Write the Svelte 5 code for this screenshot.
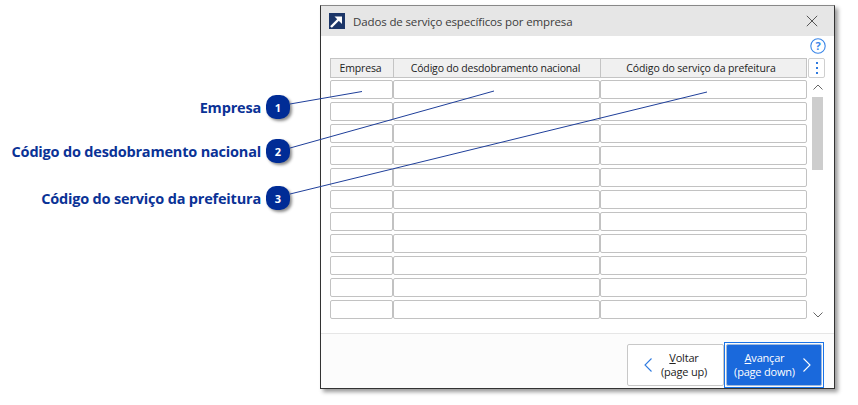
<script>
  const rows = Array.from({ length: 11 }, (_, i) => i);
  const notes = [
    { n: 1, label: 'Empresa', y: 95 },
    { n: 2, label: 'Código do desdobramento nacional', y: 139 },
    { n: 3, label: 'Código do serviço da prefeitura', y: 186 }
  ];
</script>

<div class="page">
  <div class="notes">
    {#each notes as note}
      <div class="note" style="top:{note.y}px">
        <span class="label">{note.label}</span>
        <span class="badge">{note.n}</span>
      </div>
    {/each}
  </div>

  <section class="window">
    <header class="titlebar">
      <svg class="appicon" width="16" height="16" viewBox="0 0 16 16">
        <rect width="16" height="16" fill="#1c3668" />
        <path d="M2 14 L10 6" stroke="#fff" stroke-width="2.4" />
        <path d="M5.5 3.5 H13 V11 Z" fill="#fff" />
      </svg>
      <span class="title">Dados de serviço específicos por empresa</span>
      <svg class="close" width="12" height="12" viewBox="0 0 12 12">
        <path d="M.8 .8 L11.2 11.2 M11.2 .8 L.8 11.2" stroke="#555" stroke-width="1" fill="none" />
      </svg>
    </header>

    <div class="body">
      <div class="helprow">
        <svg width="16" height="16" viewBox="0 0 16 16">
          <circle cx="8" cy="8" r="7.2" fill="none" stroke="#3a86e8" stroke-width="1.1" />
          <text x="8" y="11.8" text-anchor="middle" class="q">?</text>
        </svg>
      </div>
      <div class="tablewrap">
        <div class="tablecol">
          <div class="thead">
            <div class="th c1">Empresa</div>
            <div class="th c2">Código do desdobramento nacional</div>
            <div class="th c3">Código do serviço da prefeitura</div>
          </div>
          <div class="rows">
            {#each rows as r}
              <div class="row">
                <div class="cell c1"></div>
                <div class="cell c2"></div>
                <div class="cell c3"></div>
              </div>
            {/each}
          </div>
        </div>
        <div class="side">
          <div class="kebab"><i></i><i></i><i></i></div>
          <div class="scroll">
            <svg width="10" height="6" viewBox="0 0 10 6"><path d="M.5 5.5 L5 1 L9.5 5.5" fill="none" stroke="#666" /></svg>
            <div class="track"><div class="thumb"></div></div>
            <svg width="10" height="6" viewBox="0 0 10 6"><path d="M.5 .5 L5 5 L9.5 .5" fill="none" stroke="#666" /></svg>
          </div>
        </div>
      </div>
    </div>

    <footer class="footer">
      <button class="btn back">
        <svg width="8" height="14" viewBox="0 0 8 14"><path d="M7.5 .5 L1 7 L7.5 13.5" fill="none" stroke="#2f7be0" stroke-width="1.1" /></svg>
        <span class="btxt"><span><u>V</u>oltar</span><span>(page up)</span></span>
      </button>
      <div class="focus">
        <button class="btn next">
          <span class="btxt"><span><u>A</u>vançar</span><span>(page down)</span></span>
          <svg width="8" height="14" viewBox="0 0 8 14"><path d="M.5 .5 L7 7 L.5 13.5" fill="none" stroke="#fff" stroke-width="1.1" /></svg>
        </button>
      </div>
    </footer>
  </section>

  <svg class="leaders" width="858" height="405" viewBox="0 0 858 405">
    <path d="M290 104 L362 91.5 M290 148 L494 91 M290 194 L707 92" stroke="#1f3f9a" stroke-width="1" fill="none" />
  </svg>
</div>

<style>
  :global(body) { margin: 0; background: #fff; }
  .page {
    position: relative;
    width: 858px;
    height: 405px;
    overflow: hidden;
    background: #fff;
    font-family: "Open Sans", "Noto Sans", sans-serif;
  }
  .note {
    position: absolute;
    left: 0;
    width: 290px;
    height: 24px;
    display: flex;
    align-items: center;
    justify-content: flex-end;
    gap: 5px;
  }
  .label {
    color: #0a3296;
    font-weight: 700;
    font-size: 14.5px;
    letter-spacing: -0.19px;
    white-space: nowrap;
  }
  .badge {
    width: 24px;
    height: 24px;
    border-radius: 10px;
    background: #002c96;
    color: #fff;
    font-size: 11px;
    font-weight: 700;
    display: flex;
    align-items: center;
    justify-content: center;
    box-shadow: 2px 2px 3px rgba(0, 0, 0, .45);
  }
  .window {
    position: absolute;
    left: 320px;
    top: 5px;
    width: 515px;
    height: 384px;
    box-sizing: border-box;
    border: 1px solid #333;
    border-top-color: #888;
    background: #fff;
    display: flex;
    flex-direction: column;
    box-shadow: 3px 3px 4px rgba(0, 0, 0, .4);
  }
  .titlebar {
    height: 30px;
    flex: none;
    background: #e6e6e6;
    display: flex;
    align-items: center;
    padding: 0 16px 0 8px;
    box-sizing: border-box;
  }
  .title {
    margin-left: 8px;
    font-size: 11.5px;
    color: #3c3c3c;
    letter-spacing: -0.13px;
    white-space: nowrap;
  }
  .close { margin-left: auto; }
  .body {
    flex: 1;
    min-height: 0;
    padding: 0 8px 0 9px;
    border-bottom: 1px solid #e6e6e6;
  }
  .helprow {
    height: 22px;
    display: flex;
    justify-content: flex-end;
    align-items: flex-start;
    padding-top: 2px;
    box-sizing: border-box;
  }
  .helprow svg { display: block; }
  .q { font: 700 11px "Open Sans", sans-serif; fill: #3a86e8; }
  .tablewrap { display: flex; }
  .tablecol { width: 477px; flex: none; }
  .thead {
    display: flex;
    height: 20px;
    background: #f0f0f0;
    border-top: 1px solid #c4c4c4;
    border-bottom: 1px solid #c4c4c4;
    box-sizing: border-box;
    width: 477px;
  }
  .th {
    box-sizing: border-box;
    text-align: center;
    font-size: 10.5px;
    color: #222;
    line-height: 18px;
    letter-spacing: -0.17px;
    white-space: nowrap;
    border-left: 1px solid #c4c4c4;
    padding-right: 3px;
  }
  .th.c3 { border-right: 1px solid #c4c4c4; padding-right: 5px; letter-spacing: -0.13px; }
  .c1 { width: 63px; flex: none; }
  .c2 { width: 207px; flex: none; }
  .c3 { width: 207px; flex: none; }
  .rows {
    padding-top: 2px;
    display: flex;
    flex-direction: column;
    gap: 3px;
  }
  .row { display: flex; width: 477px; }
  .cell {
    height: 19px;
    box-sizing: border-box;
    border: 1px solid #c2c2c2;
    border-radius: 2px;
    background: #fff;
  }
  .side {
    width: 19px;
    flex: none;
    display: flex;
    flex-direction: column;
    align-items: flex-start;
  }
  .kebab {
    width: 17px;
    height: 20px;
    border: 1px solid #cfcfcf;
    border-radius: 2px;
    box-sizing: border-box;
    display: flex;
    flex-direction: column;
    align-items: center;
    justify-content: center;
    gap: 3px;
    margin-left: 1px;
  }
  .kebab i { width: 2px; height: 2px; background: #2f7be0; display: block; }
  .scroll {
    margin-top: 6px;
    display: flex;
    flex-direction: column;
    align-items: center;
    height: 234px;
    margin-left: 5px;
  }
  .track { flex: 1; padding-top: 7px; }
  .thumb { width: 11px; height: 73px; background: #cdcdcd; }
  .footer {
    height: 54px;
    flex: none;
    background: #fcfcfc;
    display: flex;
    justify-content: flex-end;
    align-items: flex-start;
    padding: 8px 10px 0 0;
    box-sizing: border-box;
  }
  .btn {
    font-family: inherit;
    font-size: 11px;
    line-height: 14px;
    width: 97px;
    height: 42px;
    box-sizing: border-box;
    border-radius: 2px;
    border: 1px solid #c8c8c8;
    background: #fff;
    color: #222;
    display: flex;
    align-items: center;
    justify-content: center;
    gap: 9px;
    padding: 0;
    margin-top: 2px;
  }
  .btxt { display: flex; flex-direction: column; align-items: center; letter-spacing: -0.2px; }
  .focus {
    border: 1px solid #1a74e8;
    padding: 1px;
    height: 46px;
    box-sizing: border-box;
  }
  .next {
    background: #1a69dc;
    color: #fff;
    border-color: #9db9df;
    margin-top: 0;
    width: 96px;
    gap: 8px;
    padding-right: 3px;
  }
  .leaders { position: absolute; left: 0; top: 0; pointer-events: none; }
</style>
